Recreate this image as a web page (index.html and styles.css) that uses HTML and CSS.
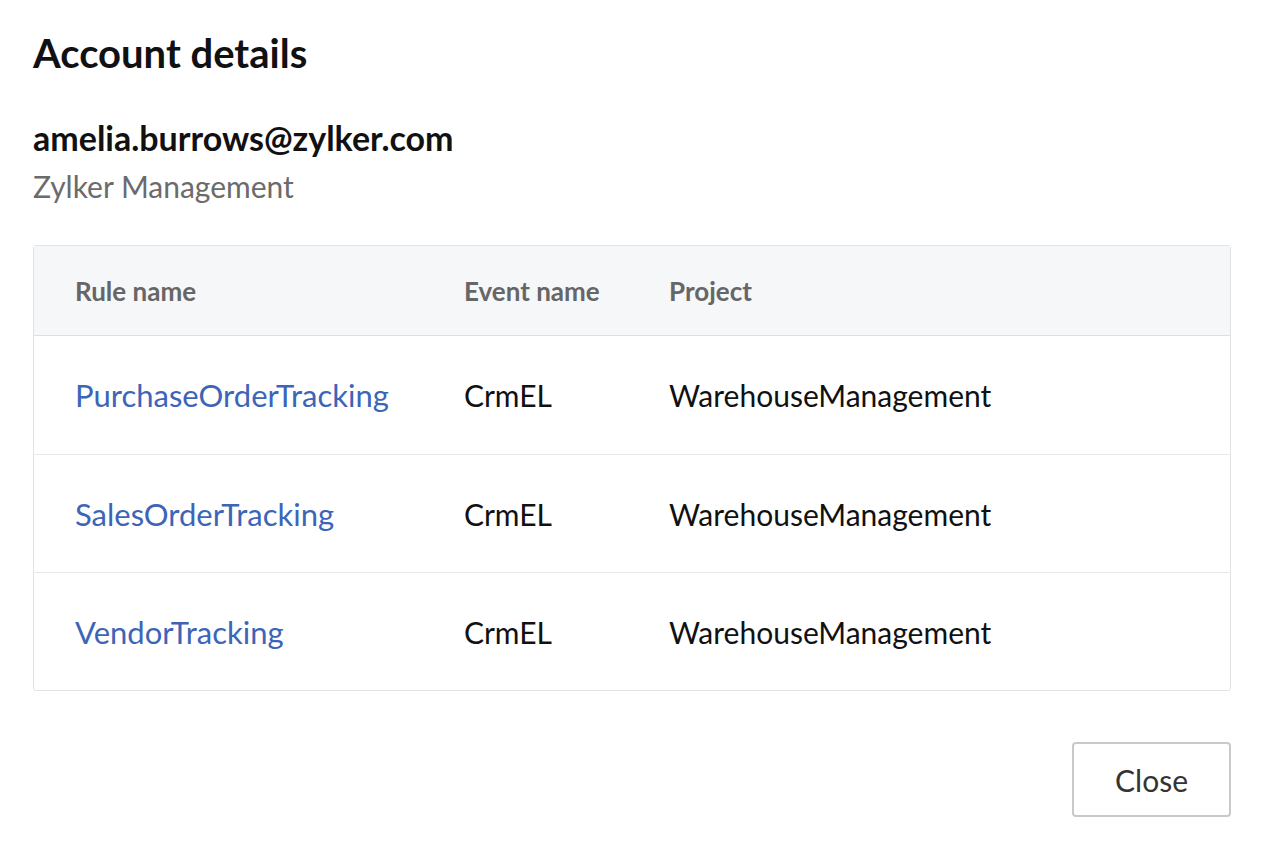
FILE: index.html
```html
<!DOCTYPE html>
<html lang="en">
<head>
<meta charset="utf-8">
<title>Account details</title>
<link rel="stylesheet" href="styles.css">
</head>
<body>
<div class="dialog">
  <h1 class="dialog-title">Account details</h1>
  <div class="account">
    <div class="account-email">amelia.burrows@zylker.com</div>
    <div class="account-org">Zylker Management</div>
  </div>
  <div class="rules">
    <div class="rules-row rules-head">
      <div class="cell">Rule name</div>
      <div class="cell">Event name</div>
      <div class="cell">Project</div>
    </div>
    <div class="rules-row">
      <div class="cell"><a class="rule-link" href="#">PurchaseOrderTracking</a></div>
      <div class="cell">CrmEL</div>
      <div class="cell">WarehouseManagement</div>
    </div>
    <div class="rules-row">
      <div class="cell"><a class="rule-link" href="#">SalesOrderTracking</a></div>
      <div class="cell">CrmEL</div>
      <div class="cell">WarehouseManagement</div>
    </div>
    <div class="rules-row">
      <div class="cell"><a class="rule-link" href="#">VendorTracking</a></div>
      <div class="cell">CrmEL</div>
      <div class="cell">WarehouseManagement</div>
    </div>
  </div>
  <div class="dialog-footer">
    <button class="btn" type="button">Close</button>
  </div>
</div>
</body>
</html>
```

FILE: styles.css
```css
* {
  box-sizing: border-box;
}

html, body {
  margin: 0;
  padding: 0;
  background: #ffffff;
}

body {
  font-family: Lato, "Open Sans", sans-serif;
  color: #111111;
}

.dialog {
  padding: 29px 46px 0 33px;
}

.dialog-title {
  margin: 0;
  font-size: 40px;
  font-weight: 700;
  line-height: 48px;
  color: #111111;
}

.account {
  margin-top: 40px;
}

.account-email {
  font-size: 34px;
  font-weight: 700;
  line-height: 41px;
  color: #111111;
}

.account-org {
  margin-top: 10px;
  font-size: 30px;
  line-height: 36px;
  color: #6b6b6b;
}

.rules {
  margin-top: 41px;
  border: 1px solid #e3e3e3;
  border-radius: 3px;
}

.rules-row {
  display: grid;
  grid-template-columns: 389px 205px 1fr;
  align-items: center;
  height: 118px;
  padding-left: 41px;
  border-top: 1px solid #e8e8e8;
  font-size: 30px;
  color: #111111;
}

.rules-head {
  height: 90px;
  border-top: none;
  background: #f6f7f9;
  border-bottom: 1px solid #dedfe1;
  font-size: 26px;
  font-weight: 700;
  color: #666666;
}

.rules-head + .rules-row {
  border-top: none;
}

.rule-link {
  font-size: 31px;
  color: #3c65b8;
  text-decoration: none;
}

.dialog-footer {
  display: flex;
  justify-content: flex-end;
  margin-top: 51px;
}

.btn {
  width: 159px;
  height: 75px;
  border: 2px solid #c9c9c9;
  border-radius: 4px;
  background: #ffffff;
  font-family: Lato, "Open Sans", sans-serif;
  font-size: 30px;
  color: #333333;
  cursor: pointer;
}
```
